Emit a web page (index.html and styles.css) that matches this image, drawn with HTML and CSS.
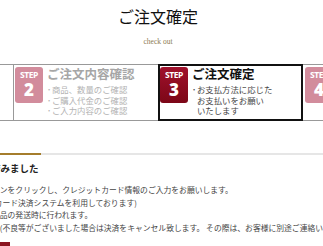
FILE: index.html
```html
<!DOCTYPE html>
<html lang="ja">

<head>
    <meta charset="UTF-8">
    <meta name="viewport" content="width=device-width, initial-scale=1.0">
    <title>ご注文確定</title>
    <link rel="stylesheet" href="styles.css">
</head>

<body>
    <div class="page">
        <header class="pageHead">
            <h1>ご注文確定</h1>
            <p class="sub">check out</p>
        </header>

        <div class="stepsWrap">
            <ol class="steps">
                <li class="step">
                    <div class="badge"><span>STEP</span><b>1</b></div>
                    <div class="stepText">
                        <h2>カート確認</h2>
                        <ul>
                            <li>商品のご確認</li>
                        </ul>
                    </div>
                </li>
                <li class="step">
                    <div class="badge"><span>STEP</span><b>2</b></div>
                    <div class="stepText">
                        <h2>ご注文内容確認</h2>
                        <ul>
                            <li>商品、数量のご確認</li>
                            <li>ご購入代金のご確認</li>
                            <li>ご入力内容のご確認</li>
                        </ul>
                    </div>
                </li>
                <li class="step current">
                    <div class="badge"><span>STEP</span><b>3</b></div>
                    <div class="stepText">
                        <h2>ご注文確定</h2>
                        <ul>
                            <li>お支払方法に応じた<br>お支払いをお願い<br>いたします</li>
                        </ul>
                    </div>
                </li>
                <li class="step">
                    <div class="badge"><span>STEP</span><b>4</b></div>
                    <div class="stepText">
                        <h2>ご注文完了</h2>
                        <ul>
                            <li>商品の発送</li>
                        </ul>
                    </div>
                </li>
            </ol>
        </div>

        <div class="mainWrap">
            <section class="main">
                <div class="tabLine"><span></span></div>
                <h3>ご注文が済みました</h3>
                <p class="body">
                    ・下記のボタンをクリックし、クレジットカード情報のご入力をお願いします。<br>
                    (クレジットカード決済システムを利用しております)<br>
                    ・決済は、商品の発送時に行われます。<br>
                    ・商品の欠品(不良等がございました場合は決済をキャンセル致します。 その際は、お客様に別途ご連絡いたします。
                </p>
                <div class="payBtn"></div>
            </section>
        </div>
    </div>
</body>

</html>
```

FILE: styles.css
```css
body {
    margin: 0;
    overflow: hidden;
    background-color: white;
    font-family: "Noto Sans CJK JP", sans-serif;
}

.page {
    width: 316px;
}

.pageHead {
    text-align: center;
}

.pageHead h1 {
    margin: 8px 0 0;
    font-family: "Liberation Serif", "Noto Sans CJK JP", serif;
    font-size: 16px;
    font-weight: normal;
    line-height: 20px;
    color: #111;
}

.pageHead .sub {
    margin: 9px 0 0;
    font-family: "Liberation Serif", serif;
    font-size: 7.5px;
    line-height: 10px;
    color: #8c7a52;
}

/* steps */

.stepsWrap {
    display: flex;
    justify-content: center;
    margin-top: 17px;
}

.steps {
    display: flex;
    flex-shrink: 0;
    width: 580px;
    margin: 0;
    padding: 0;
    list-style: none;
}

.step {
    box-sizing: border-box;
    display: flex;
    gap: 4px;
    width: 145px;
    height: 57px;
    padding: 2px 1px 0;
    border-top: 1px solid #999;
    border-bottom: 1px solid #999;
    border-left: 1px solid #999;
}

.step.current {
    border: 2px solid #111;
    padding: 1px 0 0;
}

.step.current + .step {
    border-left: none;
    padding-left: 2px;
}

.badge {
    display: flex;
    flex-direction: column;
    align-items: center;
    flex-shrink: 0;
    width: 28px;
    height: 36px;
    border-radius: 3px;
    background-color: #d28c9c;
    color: white;
    font-family: "Open Sans", sans-serif;
    font-weight: bold;
}

.badge span {
    margin-top: 3px;
    font-size: 8.5px;
    line-height: 10px;
    letter-spacing: -0.4px;
}

.badge b {
    font-size: 17px;
    line-height: 19px;
}

.current .badge {
    background: linear-gradient(#a0112c, #7c0717);
}

.stepText h2 {
    margin: 0;
    font-size: 12.5px;
    line-height: 14px;
    font-weight: bold;
    color: #a6a6a6;
    white-space: nowrap;
}

.stepText ul {
    margin: 3px 0 0;
    padding: 0;
    list-style: none;
}

.stepText li {
    display: flex;
    font-size: 8.4px;
    line-height: 10.5px;
    color: #b3b3b3;
    white-space: nowrap;
}

.stepText li::before {
    content: "･";
    flex-shrink: 0;
    width: 5px;
}

.current .stepText h2 {
    color: #111;
}

.current .stepText li {
    color: #444;
}

/* main */

.mainWrap {
    display: flex;
    justify-content: center;
    margin-top: 32px;
}

.main {
    flex-shrink: 0;
    width: 580px;
    padding-left: 85px;
    box-sizing: border-box;
}

.tabLine {
    height: 2px;
    margin-left: -85px;
    background-color: #e6e6e6;
}

.tabLine span {
    display: block;
    width: 173px;
    height: 2px;
    background-color: #a57d2c;
}

.main h3 {
    margin: 6px 0 0;
    font-size: 9.5px;
    line-height: 14px;
    font-weight: bold;
    color: #222;
    white-space: nowrap;
}

.main .body {
    margin: 9px 0 0;
    font-size: 7.8px;
    line-height: 12.7px;
    color: #444;
    white-space: nowrap;
}

.payBtn {
    width: 57px;
    height: 20px;
    margin-top: 7px;
    background-color: #8b1420;
}
```
